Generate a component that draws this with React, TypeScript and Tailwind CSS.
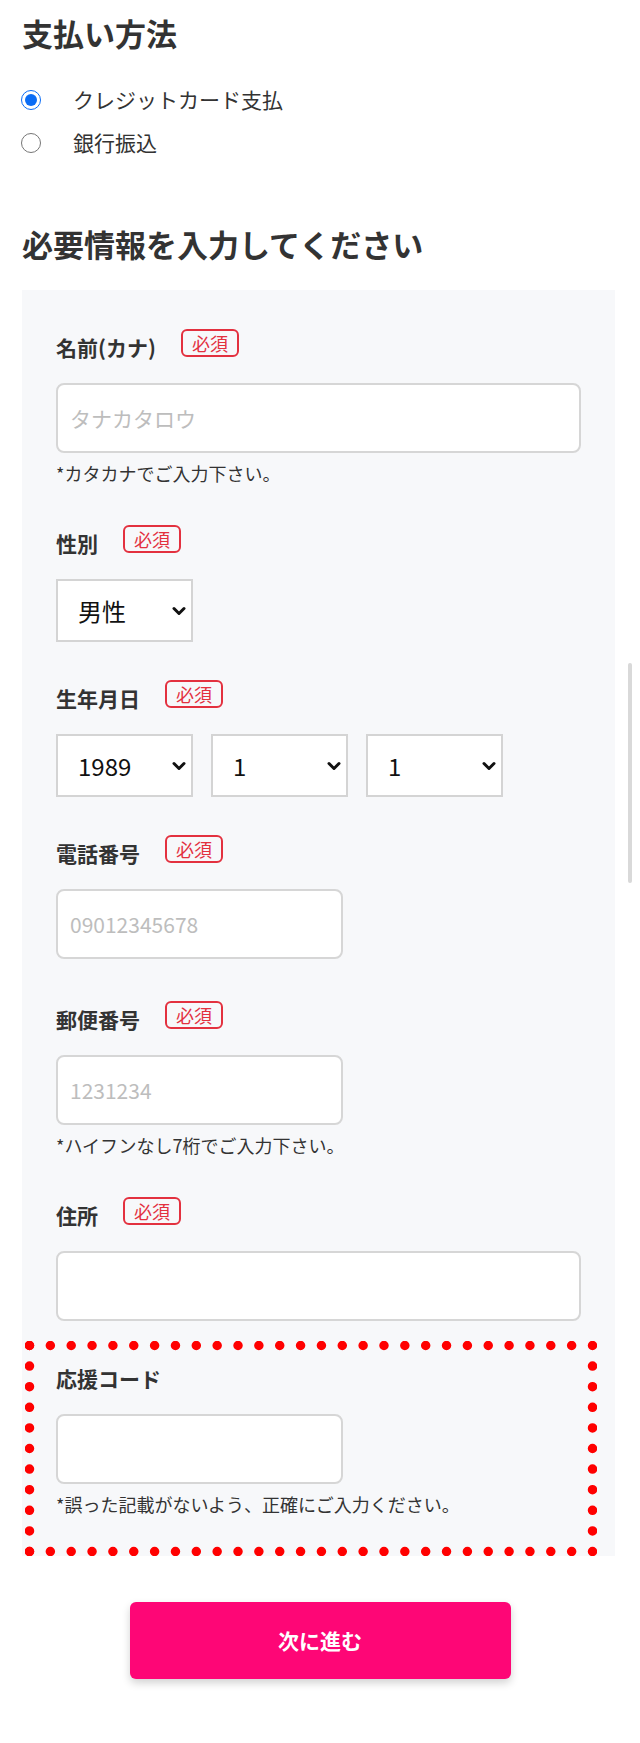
import React from "react";

const Badge = () => (
  <span className="ml-[25px] mb-2 flex h-[28px] w-[58px] items-center justify-center rounded-[6px] border-2 border-[#e3313f] text-[18px] leading-none text-[#e3313f]">
    必須
  </span>
);

const Label = ({ text, required = true }: { text: string; required?: boolean }) => (
  <div className="flex h-[30px] items-center">
    <span className="text-[21px] font-bold leading-[30px] text-[#333]">{text}</span>
    {required && <Badge />}
  </div>
);

const Hint = ({ text }: { text: string }) => (
  <p className="mt-[6px] text-[18px] leading-[28px] text-[#333]">{text}</p>
);

const TextInput = ({ placeholder, wide = false }: { placeholder?: string; wide?: boolean }) => (
  <input
    type="text"
    placeholder={placeholder}
    className={
      wide
        ? "mt-[21px] block h-[70px] w-[525px] rounded-[8px] border-2 border-[#d6d6d6] bg-white pl-3 text-[21px] text-[#333] placeholder:text-[#bdbdbd] outline-none"
        : "mt-[21px] block h-[70px] w-[287px] rounded-[8px] border-2 border-[#d6d6d6] bg-white pl-3 text-[21px] text-[#333] placeholder:text-[#bdbdbd] outline-none"
    }
  />
);

const Chevron = () => (
  <svg
    className="pointer-events-none absolute right-[7px] top-1/2 -translate-y-1/2"
    width="14"
    height="9"
    viewBox="0 0 14 9"
    fill="none"
  >
    <polyline points="2,2 7,7 12,2" stroke="#111" strokeWidth="3" strokeLinecap="round" strokeLinejoin="round" />
  </svg>
);

const Select = ({ value, options }: { value: string; options: string[] }) => (
  <div className="relative h-[63px] w-[137px]">
    <select
      defaultValue={value}
      className="h-full w-full appearance-none rounded-none border-2 border-[#d4d4d4] bg-white pl-[20px] text-[24px] text-[#111] outline-none"
    >
      {options.map((o) => (
        <option key={o} value={o}>
          {o}
        </option>
      ))}
    </select>
    <Chevron />
  </div>
);

const DottedFrame = () => {
  const w = 572;
  const h = 215;
  const r = 4.5;
  return (
    <svg className="pointer-events-none absolute inset-0" width={w} height={h} viewBox={`0 0 ${w} ${h}`}>
      <g stroke="#ff0000" strokeWidth="9.5" strokeLinecap="round" fill="none">
        <line x1={r} y1={r} x2={w - r} y2={r} strokeDasharray={`0 ${(w - 2 * r) / 27}`} />
        <line x1={r} y1={h - r} x2={w - r} y2={h - r} strokeDasharray={`0 ${(w - 2 * r) / 27}`} />
        <line x1={r} y1={r} x2={r} y2={h - r} strokeDasharray={`0 ${(h - 2 * r) / 10}`} />
        <line x1={w - r} y1={r} x2={w - r} y2={h - r} strokeDasharray={`0 ${(h - 2 * r) / 10}`} />
      </g>
    </svg>
  );
};

const years = ["1987", "1988", "1989", "1990", "1991"];
const months = Array.from({ length: 12 }, (_, i) => String(i + 1));
const days = Array.from({ length: 31 }, (_, i) => String(i + 1));

export default function App() {
  return (
    <div className="relative min-h-[1743px] w-[640px] bg-white font-['Noto_Sans_CJK_JP','Noto_Sans',sans-serif] text-[#333]">
      <h2 className="ml-[22px] pt-[13px] text-[31px] font-bold leading-[40px] text-[#333]">支払い方法</h2>

      <div className="ml-[21px] mt-[25px]">
        <label className="flex h-[43px] items-center">
          <input type="radio" name="pay" defaultChecked className="m-0 h-5 w-5 accent-[#0a6cf5]" />
          <span className="ml-[32px] text-[21px] text-[#333]">クレジットカード支払</span>
        </label>
        <label className="flex h-[43px] items-center">
          <input type="radio" name="pay" className="m-0 h-5 w-5 accent-[#0a6cf5]" />
          <span className="ml-[32px] text-[21px] text-[#333]">銀行振込</span>
        </label>
      </div>

      <h2 className="ml-[22px] mt-[60px] text-[31px] font-bold leading-[40px] text-[#333]">必要情報を入力してください</h2>

      <div className="ml-[22px] mt-[26px] w-[593px] bg-[#f7f8fa] pl-[34px] pt-[42px]">
        <div className="mb-[41px]">
          <Label text="名前(カナ)" />
          <TextInput placeholder="タナカタロウ" wide />
          <Hint text="*カタカナでご入力下さい。" />
        </div>

        <div className="mb-[41px]">
          <Label text="性別" />
          <div className="mt-[21px]">
            <Select value="男性" options={["男性", "女性"]} />
          </div>
        </div>

        <div className="mb-[41px]">
          <Label text="生年月日" />
          <div className="mt-[21px] flex gap-[18px]">
            <Select value="1989" options={years} />
            <Select value="1" options={months} />
            <Select value="1" options={days} />
          </div>
        </div>

        <div className="mb-[45px]">
          <Label text="電話番号" />
          <TextInput placeholder="09012345678" />
        </div>

        <div className="mb-[41px]">
          <Label text="郵便番号" />
          <TextInput placeholder="1231234" />
          <Hint text="*ハイフンなし7桁でご入力下さい。" />
        </div>

        <div>
          <Label text="住所" />
          <TextInput wide />
        </div>

        <div className="relative -ml-[31.5px] mt-[20px] h-[215px] w-[572px] pl-[31.5px] pt-[21.5px]">
          <DottedFrame />
          <Label text="応援コード" required={false} />
          <TextInput />
          <Hint text="*誤った記載がないよう、正確にご入力ください。" />
        </div>
      </div>

      <div className="mt-[46px] flex justify-center">
        <button
          type="button"
          className="h-[77px] w-[381px] rounded-[6px] bg-[#fe0676] text-[21px] font-bold text-white shadow-[0_4px_8px_rgba(0,0,0,0.18)]"
        >
          次に進む
        </button>
      </div>

      <div className="absolute left-[628px] top-[663px] h-[220px] w-[4px] rounded-full bg-[#d9d9d9]" />
    </div>
  );
}
